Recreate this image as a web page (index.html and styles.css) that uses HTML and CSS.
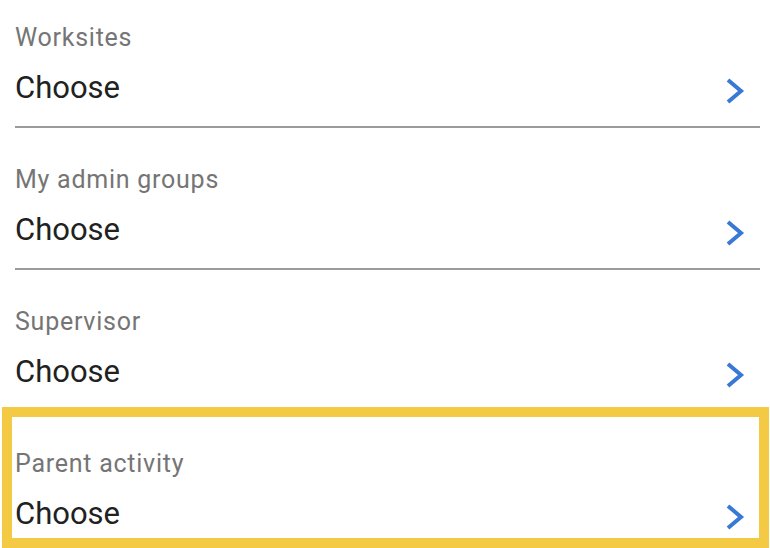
FILE: index.html
```html
<!DOCTYPE html>
<html>
<head>
<meta charset="utf-8">
<link rel="stylesheet" href="styles.css">
</head>
<body>
<div class="list">
  <div class="row">
    <div class="label">Worksites</div>
    <div class="value"><span>Choose</span><svg class="chev" width="20" height="28" viewBox="0 0 20 28"><path d="M3 3 L16 14 L3 25" /></svg></div>
  </div>
  <div class="row">
    <div class="label">My admin groups</div>
    <div class="value"><span>Choose</span><svg class="chev" width="20" height="28" viewBox="0 0 20 28"><path d="M3 3 L16 14 L3 25" /></svg></div>
  </div>
  <div class="row">
    <div class="label">Supervisor</div>
    <div class="value"><span>Choose</span><svg class="chev" width="20" height="28" viewBox="0 0 20 28"><path d="M3 3 L16 14 L3 25" /></svg></div>
  </div>
  <div class="row highlighted">
    <div class="label">Parent activity</div>
    <div class="value"><span>Choose</span><svg class="chev" width="20" height="28" viewBox="0 0 20 28"><path d="M3 3 L16 14 L3 25" /></svg></div>
    <div class="highlight"></div>
  </div>
</div>
</body>
</html>
```
FILE: styles.css
```css
html, body {
  margin: 0;
  padding: 0;
  background: #ffffff;
  overflow: hidden;
  width: 770px;
  height: 548px;
}
body {
  font-family: Roboto, "Liberation Sans", sans-serif;
}
.list {
  margin-top: -14px;
  padding: 0 10px 0 15px;
}
.row {
  position: relative;
  padding: 36px 0 18px 0;
  border-bottom: 2px solid #9b9b9b;
}
.label {
  font-size: 25px;
  line-height: 32px;
  letter-spacing: 0.75px;
  color: #757575;
}
.value {
  margin-top: 14px;
  display: flex;
  align-items: center;
  justify-content: space-between;
  font-size: 31px;
  line-height: 40px;
  color: #212121;
}
.chev {
  margin-top: 6px;
  margin-right: 15px;
}
.chev path {
  fill: none;
  stroke: #3a78d6;
  stroke-width: 4;
}
.highlight {
  position: absolute;
  top: -5px;
  left: -13px;
  right: -9px;
  height: 141px;
  box-sizing: border-box;
  border: 10px solid #f4c944;
}
```
